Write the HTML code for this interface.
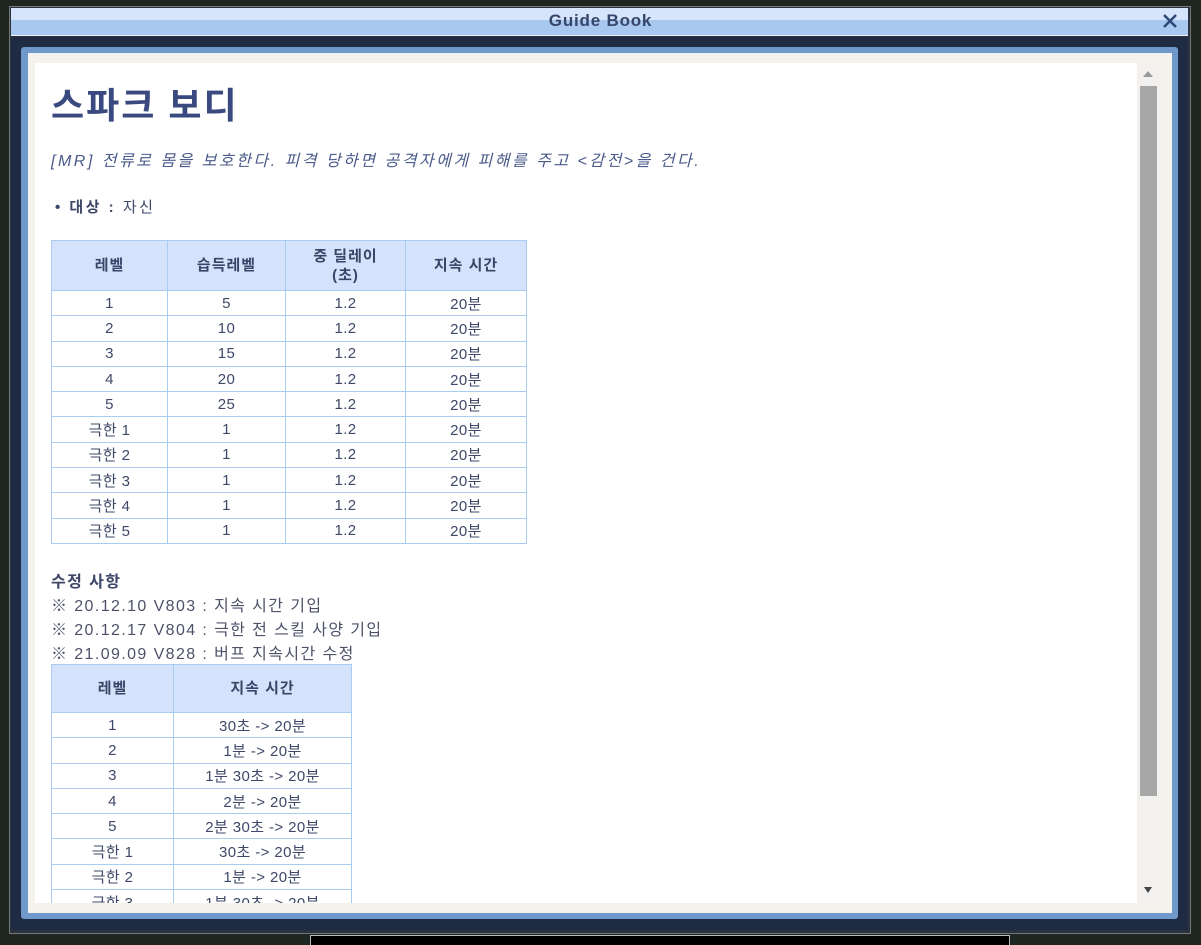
<!DOCTYPE html>
<html><head><meta charset="utf-8"><style>
*{margin:0;padding:0;box-sizing:border-box}
body{width:1201px;height:945px;background:#1d2620;position:relative;overflow:hidden;font-family:"Liberation Sans","Noto Sans CJK KR",sans-serif;color:#3f4868}
.abs{position:absolute}
table{border-collapse:collapse;position:absolute;font-size:15px;letter-spacing:0.4px;text-align:center;color:#3f4868}
td,th{border:1px solid #aacbf2;height:25.3px;padding:0;font-weight:normal}
th{background:#d4e3fb;font-weight:bold;color:#3a4568;line-height:19px;font-size:15px;letter-spacing:1px}
</style></head><body>
<div class="abs" style="left:9px;top:6px;width:1182px;height:928px;background:#2a3240;border:1px solid #777"></div>
<div class="abs" style="left:11px;top:8px;width:1177px;height:28px;background:linear-gradient(#d6e5fb 0 45%,#a9c8ef 45%);border-bottom:1px solid #eef"></div>
<div class="abs" style="left:0;top:11px;width:1201px;text-align:center;font-weight:bold;font-size:17px;letter-spacing:0.8px;color:#35466a">Guide Book</div>
<svg class="abs" style="left:1162px;top:13px" width="16" height="16" viewBox="0 0 16 16"><path d="M2 2L14 14M14 2L2 14" stroke="#2e4a78" stroke-width="2.6"/></svg>
<div class="abs" style="left:11px;top:37px;width:1177px;height:893px;background:#1f2b42"></div>
<div class="abs" style="left:21px;top:47px;width:1157px;height:872px;background:#6f98cb;border-radius:3px"></div>
<div class="abs" style="left:28px;top:53px;width:1144px;height:860px;background:#f5f2ee"></div>
<div class="abs" style="left:35px;top:63px;width:1102px;height:840px;background:#fff;overflow:hidden">
<div class="abs" style="left:16px;top:14px;font-size:36px;font-weight:bold;letter-spacing:2px;color:#3a4a80">스파크 보디</div>
<div class="abs" style="left:16px;top:84px;font-size:16px;letter-spacing:2.5px;font-style:italic;color:#4a5a8a;white-space:nowrap">[MR] 전류로 몸을 보호한다. 피격 당하면 공격자에게 피해를 주고 &lt;감전&gt;을 건다.</div>
<div class="abs" style="left:20px;top:133px;font-size:15px;letter-spacing:2.5px"><b>• 대상 :</b> 자신</div>
<table style="left:16px;top:177px;width:476px">
<tr><th style="width:116px;height:50px">레벨</th><th style="width:118px">습득레벨</th><th style="width:120px">중 딜레이<br>(초)</th><th>지속 시간</th></tr>
<tr><td>1</td><td>5</td><td>1.2</td><td>20분</td></tr>
<tr><td>2</td><td>10</td><td>1.2</td><td>20분</td></tr>
<tr><td>3</td><td>15</td><td>1.2</td><td>20분</td></tr>
<tr><td>4</td><td>20</td><td>1.2</td><td>20분</td></tr>
<tr><td>5</td><td>25</td><td>1.2</td><td>20분</td></tr>
<tr><td>극한 1</td><td>1</td><td>1.2</td><td>20분</td></tr>
<tr><td>극한 2</td><td>1</td><td>1.2</td><td>20분</td></tr>
<tr><td>극한 3</td><td>1</td><td>1.2</td><td>20분</td></tr>
<tr><td>극한 4</td><td>1</td><td>1.2</td><td>20분</td></tr>
<tr><td>극한 5</td><td>1</td><td>1.2</td><td>20분</td></tr>
</table>
<div class="abs" style="left:16px;top:508px;font-size:16px;letter-spacing:1.4px;line-height:24px;color:#4d5268;white-space:nowrap"><b style="color:#3f4868">수정 사항</b><br>※ 20.12.10 V803 : 지속 시간 기입<br>※ 20.12.17 V804 : 극한 전 스킬 사양 기입<br>※ 21.09.09 V828 : 버프 지속시간 수정</div>
<table style="left:16px;top:601px;width:301px">
<tr><th style="width:122px;height:48px">레벨</th><th>지속 시간</th></tr>
<tr><td>1</td><td>30초 -&gt; 20분</td></tr>
<tr><td>2</td><td>1분 -&gt; 20분</td></tr>
<tr><td>3</td><td>1분 30초 -&gt; 20분</td></tr>
<tr><td>4</td><td>2분 -&gt; 20분</td></tr>
<tr><td>5</td><td>2분 30초 -&gt; 20분</td></tr>
<tr><td>극한 1</td><td>30초 -&gt; 20분</td></tr>
<tr><td>극한 2</td><td>1분 -&gt; 20분</td></tr>
<tr><td>극한 3</td><td>1분 30초 -&gt; 20분</td></tr>
</table>
</div>
<div class="abs" style="left:1138px;top:63px;width:21px;height:840px;background:#f3f0f0"></div>
<div class="abs" style="left:1143px;top:71px;width:0;height:0;border-left:5px solid transparent;border-right:5px solid transparent;border-bottom:6px solid #999"></div>
<div class="abs" style="left:1140px;top:86px;width:17px;height:710px;background:#a8a7a8"></div>
<div class="abs" style="left:1144px;top:887px;width:0;height:0;border-left:4px solid transparent;border-right:4px solid transparent;border-top:6px solid #444"></div>
<div class="abs" style="left:310px;top:935px;width:700px;height:10px;background:#000;border:1px solid #bbb;border-bottom:none"></div>
</body></html>
